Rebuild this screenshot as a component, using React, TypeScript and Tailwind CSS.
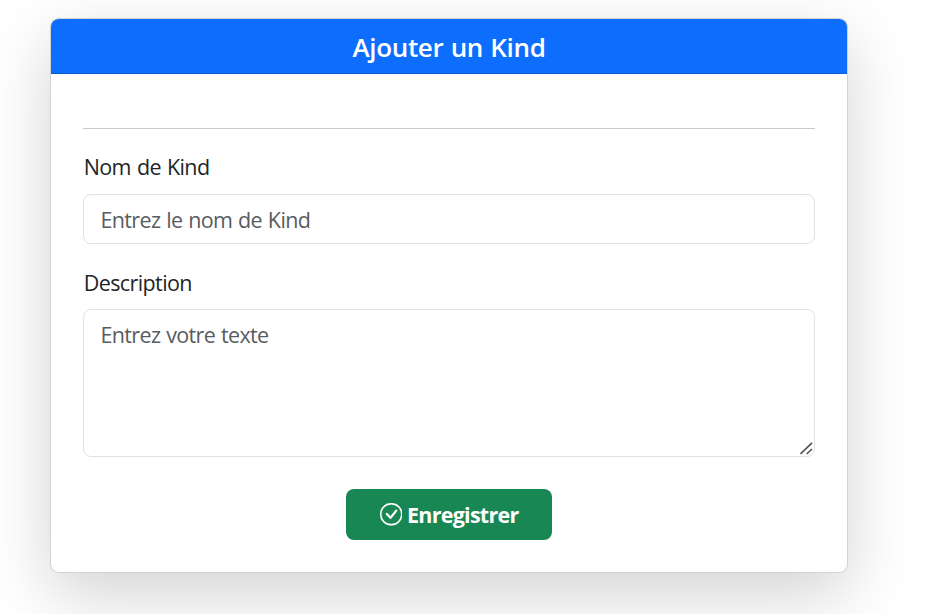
import { BsCheckCircle } from "react-icons/bs";

const label = "block w-fit pl-[0.7px] text-[21.5px] leading-[33px] tracking-[-0.6px] [word-spacing:1px]";
const field =
  "block w-full rounded-[8px] border border-[#dee2e6] bg-white px-[16.5px] text-[21.5px] leading-[33px] tracking-[-0.65px] [word-spacing:0.9px] text-[#212529] placeholder:text-[#595c5f] placeholder:opacity-100 outline-none";

export default function App() {
  return (
    <main className="h-[614px] overflow-hidden bg-white pt-[18px] pl-[50px] font-['Open_Sans','Noto_Sans',sans-serif] text-[#212529]">
      <section className="h-[555px] w-[798px] rounded-[9px] border border-black/[0.175] bg-white shadow-[0_22px_66px_rgba(0,0,0,0.175)]">
        <header className="h-[55px] rounded-t-[8px] border-b border-black/[0.175] bg-[#0d6efd] pt-[11px] text-center">
          <h1 className="text-[26px] leading-[34px] font-semibold tracking-[-0.35px] [word-spacing:0.9px] text-white">
            Ajouter un Kind
          </h1>
        </header>
        <form className="px-8" onSubmit={(e) => e.preventDefault()}>
          <hr className="mt-[54px] border-t border-[#c8c9ca]" />
          <label htmlFor="nom" className={`mt-[21px] ${label}`}>
            Nom de Kind
          </label>
          <input id="nom" placeholder="Entrez le nom de Kind" className={`mt-[11px] h-[50px] ${field}`} />
          <label htmlFor="description" className={`mt-[22px] ${label}`}>
            Description
          </label>
          <div className="relative mt-[10px]">
            <textarea
              id="description"
              placeholder="Entrez votre texte"
              className={`h-[148px] resize-none pt-[8px] ${field}`}
            />
            <svg
              viewBox="0 0 13 13"
              className="pointer-events-none absolute right-[2px] bottom-[2px] size-[13px]"
              fill="none"
              stroke="#555"
              strokeWidth="1.7"
            >
              <path d="M.5 12 12 .8M6.7 12 12 7" />
            </svg>
          </div>
          <button
            type="submit"
            className="mx-auto mt-8 flex h-[51px] w-[206px] items-center justify-center gap-[5px] rounded-[8px] bg-[#198754] text-[21.5px] leading-[33px] font-bold tracking-[-0.75px] text-white"
          >
            <BsCheckCircle className="size-[22.5px] stroke-white" strokeWidth={0.15} />
            <span>Enregistrer</span>
          </button>
        </form>
      </section>
    </main>
  );
}
